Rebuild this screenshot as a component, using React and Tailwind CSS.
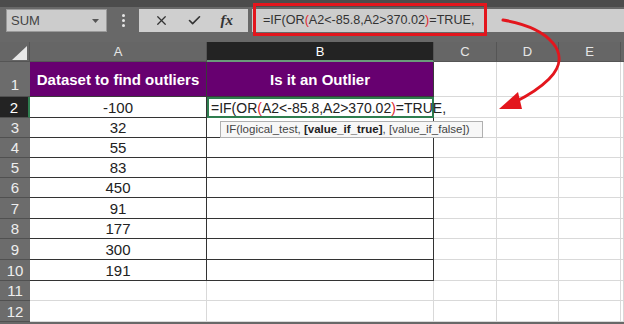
import { X, Check } from 'lucide-react';

const COLS = 'grid grid-cols-[30px_177px_227px_63px_62px_62px_1fr] grid-rows-[100%] leading-none';
const VALUES = ['-100', '32', '55', '83', '450', '91', '177', '300', '191'];
// row heights for rows 2..12, whole pixels so the gridlines stay crisp
const HEIGHTS = ['h-[21px]', 'h-[20px]', 'h-[20px]', 'h-[20px]', 'h-[20px]', 'h-[21px]', 'h-[20px]', 'h-[21px]', 'h-[21px]', 'h-[20px]', 'h-[21px]'];

function Formula({ size }) {
  return (
    <span className={size}>
      =IF(OR<span className="text-[#e0262c]">(</span>A2&lt;-85.8,A2&gt;370.02<span className="text-[#e0262c]">)</span>=TRUE,
    </span>
  );
}

function RowHead({ n, active, tall }) {
  return (
    <div className={`flex justify-center border-b border-[#505050] text-[15px] ${tall ? 'items-end pb-[4px]' : 'items-center'} ${
      active ? 'bg-[#232323] text-white border-r-2 border-r-[#2e7d4f]' : 'bg-[#6c6c6c] text-[#eeeeee]'
    }`}>
      {n}
    </div>
  );
}

function Blank() {
  return <div className="border-r border-b border-[#d9d9d9] bg-white" />;
}

export default function App() {
  return (
    <div className="relative w-[624px] h-[324px] overflow-hidden bg-[#686868] font-['Liberation_Sans',sans-serif]">
      {/* top strip */}
      <div className="h-[7px] bg-[#4c4c4c]" />

      {/* formula bar */}
      <div className="h-[35px] flex items-start pt-[2px]">
        <div className="ml-[6px] w-[101px] h-[23px] bg-[#cccccc] border border-[#9a9a9a] flex items-center justify-between pl-[4px] pr-[7px]">
          <span className="text-[13px] text-[#444]">SUM</span>
          <svg width="7" height="4" viewBox="0 0 7 4"><path d="M0 0h7L3.5 4z" fill="#555" /></svg>
        </div>
        <div className="w-[32px] h-[23px] flex flex-col items-center justify-center gap-[2px]">
          <span className="w-[3px] h-[3px] rounded-full bg-[#e6e6e6]" />
          <span className="w-[3px] h-[3px] rounded-full bg-[#e6e6e6]" />
          <span className="w-[3px] h-[3px] rounded-full bg-[#e6e6e6]" />
        </div>
        <div className="w-[109px] h-[23px] bg-[#cfcfcf] flex items-center justify-around px-[6px] text-[#333]">
          <X size={15} strokeWidth={2} />
          <Check size={15} strokeWidth={2.6} />
          <span className="font-['Liberation_Serif',serif] italic text-[15px] font-semibold">fx</span>
        </div>
        <div className="ml-[4px] flex-1 h-[23px] bg-[#cdcdcd] flex items-center pl-[11px] text-[#333]">
          <Formula size="text-[12.6px]" />
        </div>
      </div>

      {/* column headers */}
      <div className={`${COLS} h-[20px] text-[13px] text-[#e6e6e6]`}>
        <div className="relative bg-[#666] border-r border-b border-[#555]">
          <svg className="absolute left-[12px] top-[4px]" width="15" height="14" viewBox="0 0 15 14"><path d="M15 0v14H0z" fill="#e8e8e8" /></svg>
        </div>
        <div className="flex items-center justify-center bg-[#666] border-r border-b border-[#555]">A</div>
        <div className="flex items-center justify-center bg-[#232323] border-r border-[#555] border-b-2 border-b-[#6a9a7a] text-white">B</div>
        <div className="flex items-center justify-center bg-[#666] border-r border-b border-[#555]">C</div>
        <div className="flex items-center justify-center bg-[#666] border-r border-b border-[#555]">D</div>
        <div className="flex items-center justify-center bg-[#666] border-r border-b border-[#555]">E</div>
        <div className="bg-[#666] border-b border-[#555]" />
      </div>

      {/* row 1 */}
      <div className={`${COLS} h-[35px]`}>
        <RowHead n={1} tall />
        <div className="flex items-center justify-center bg-[#670070] border-r border-b border-[#3a3a3a] text-white font-bold text-[15px]">Dataset to find outliers</div>
        <div className="flex items-center justify-center bg-[#670070] border-r border-b border-[#3a3a3a] text-white font-bold text-[15px]">Is it an Outlier</div>
        <Blank /><Blank /><Blank /><Blank />
      </div>

      {/* data rows */}
      {VALUES.map((v, i) => (
        <div key={i} className={`${COLS} ${HEIGHTS[i]}`}>
          <RowHead n={i + 2} active={i === 0} />
          <div className="flex items-center justify-center bg-white border-r border-b border-[#333] text-[15px] text-[#222]">{v}</div>
          {i === 0 ? (
            <div className="flex items-center bg-white border-2 border-[#2e7d4f] pl-[2px] text-[14px] text-[#222] whitespace-nowrap z-10">
              <Formula />
              <span className="ml-[1px] w-px h-[16px] bg-[#222]" />
            </div>
          ) : (
            <div className="bg-white border-r border-b border-[#333]" />
          )}
          <Blank /><Blank /><Blank /><Blank />
        </div>
      ))}

      {[11, 12].map((n, i) => (
        <div key={n} className={`${COLS} ${HEIGHTS[9 + i]}`}>
          <RowHead n={n} />
          <Blank /><Blank /><Blank /><Blank /><Blank /><Blank />
        </div>
      ))}

      {/* function tooltip */}
      <div className="absolute left-[220px] top-[121px] w-[263px] h-[17px] bg-[#f7f7f7] border border-[#b0b0b0] flex items-center pl-[5px] text-[11.5px] text-[#444] whitespace-pre">
        IF(logical_test, <span className="font-bold text-[#222]">[value_if_true]</span>, [value_if_false])
      </div>

      {/* red highlight box */}
      <div className="absolute left-[253px] top-[3px] w-[234px] h-[33px] border-[3px] border-[#e3161d]" />

      {/* red arrow */}
      <svg className="absolute inset-0 pointer-events-none" width="624" height="324" viewBox="0 0 624 324">
        <path d="M503 20 C550 28 574 54 549 79 C539 89 527 96 515 102" fill="none" stroke="#e3161d" strokeWidth="3" strokeLinecap="round" />
        <path d="M499 109 L518 92 L522 109 Z" fill="#e3161d" />
      </svg>
    </div>
  );
}
